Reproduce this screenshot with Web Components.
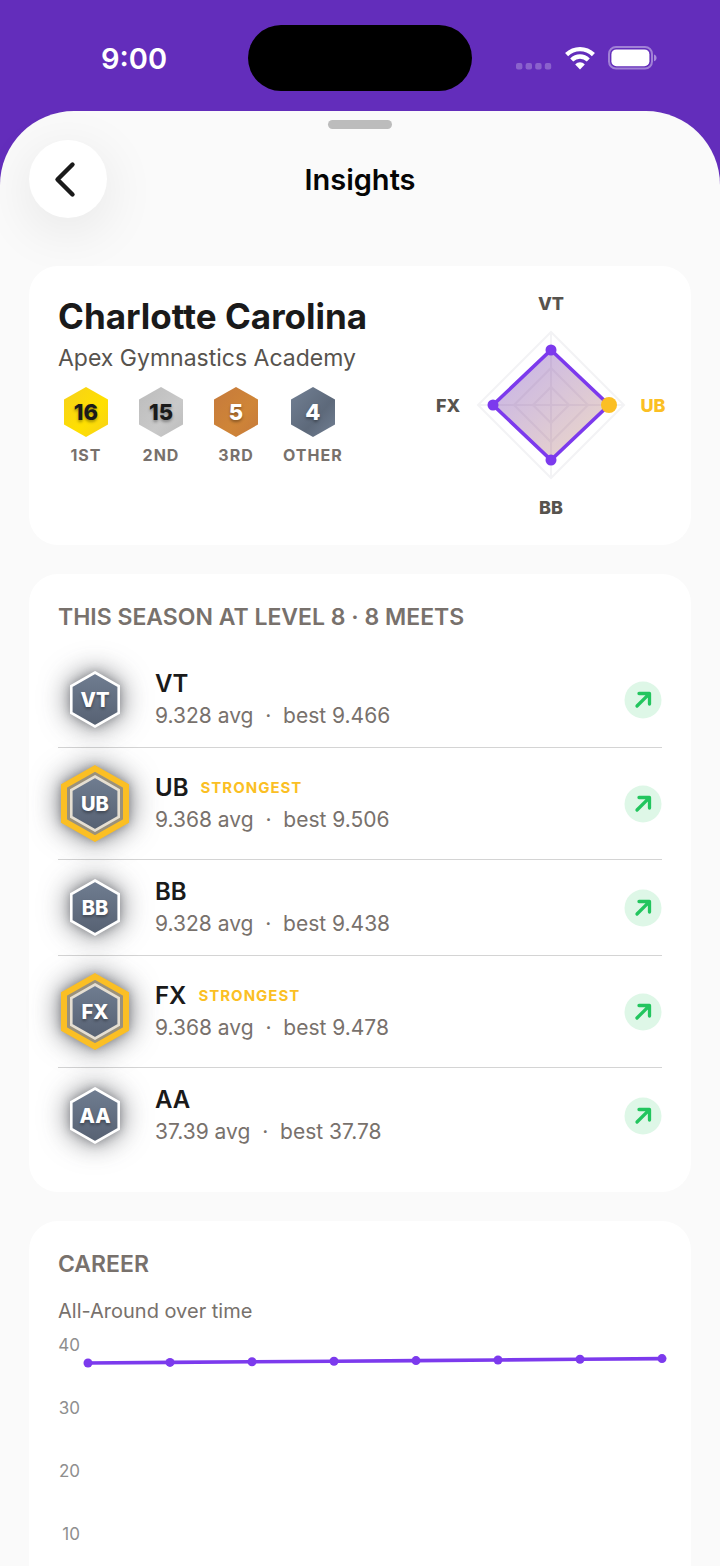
<!DOCTYPE html>
<html lang="en">
<head>
    <meta charset="utf-8">
    <meta name="viewport" content="width=device-width, initial-scale=1">
    <title>Insights</title>
    <style>
        body {
            margin: 0;
            background: #632dbb;
            font-family: Inter, "Liberation Sans", sans-serif;
            color: #1a1a1a;
        }
    </style>
</head>
<body>
<insights-page></insights-page>

<script>
class StatusBar extends HTMLElement {
    constructor() {
        super();
        this.attachShadow({mode: 'open'}).innerHTML = `
            <style>
:host {
    display: grid;
    grid-template-columns: 1fr auto 1fr;
    align-items: center;
    padding: 25px 20px 20px;
    color: #fff;
}

.time {
    justify-self: center;
    font-size: 29px;
    font-weight: 600;
}

.island {
    width: 224px;
    height: 66px;
    border-radius: 33px;
    background: #000;
}

.icons {
    justify-self: center;
    display: flex;
    align-items: center;
    gap: 13px;
}
            </style>
            <span class="time"><slot></slot></span>
            <div class="island"></div>
            <div class="icons">
                <svg width="36" height="24" viewBox="0 0 36 24" fill="#fff" opacity=".25">
                    <rect x="0" y="17" width="6.4" height="6.4" rx="2"/>
                    <rect x="9.6" y="17" width="6.4" height="6.4" rx="2"/>
                    <rect x="19.2" y="17" width="6.4" height="6.4" rx="2"/>
                    <rect x="28.8" y="17" width="6.4" height="6.4" rx="2"/>
                </svg>
                <svg width="30" height="24" viewBox="0 0 30 24" fill="none" stroke="#fff" stroke-width="4.4">
                    <path d="M1.6 8.6C9.2 1.3 20.8 1.3 28.4 8.6"/>
                    <path d="M6.7 14C11.6 9.4 18.4 9.4 23.3 14"/>
                    <path d="M10.2 18.4C13 15.6 17 15.6 19.800 18.4L15 23.400Z" fill="#fff" stroke="none"/>
                </svg>
                <svg width="49" height="24" viewBox="0 0 49 24">
                    <rect x="1" y="1" width="43" height="21.6" rx="7" fill="none" stroke="#fff" stroke-opacity=".4" stroke-width="2"/>
                    <rect x="3.4" y="3.4" width="38" height="16.8" rx="5" fill="#fff"/>
                    <path d="M46 8.6c3.4 1 3.4 5.6 0 6.6z" fill="#fff" fill-opacity=".45"/>
                </svg>
            </div>
        `;
    }
}

class SheetHeader extends HTMLElement {
    constructor() {
        super();
        this.attachShadow({mode: 'open'}).innerHTML = `
            <style>
:host {
    display: block;
    padding: 9px 29px 48px;
}

.grabber {
    width: 64px;
    height: 9px;
    margin: 0 auto 11px;
    border-radius: 5px;
    background: #bcbcbc;
}

.bar {
    display: grid;
    grid-template-columns: 1fr auto 1fr;
    align-items: center;
}

button {
    display: grid;
    place-items: center;
    width: 78px;
    height: 78px;
    padding: 0;
    border: 0;
    border-radius: 50%;
    background: #fff;
    box-shadow: 0 12px 56px rgb(0 0 0 / 9%);
    cursor: pointer;
}

h1 {
    margin: 0;
    font-size: 29px;
    font-weight: 600;
    color: #050505;
}
            </style>
            <div class="grabber"></div>
            <div class="bar">
                <button type="button" aria-label="Back">
                    <svg width="30" height="38" viewBox="0 0 30 38" fill="none" stroke="#1a1a1a" stroke-width="4.4" stroke-linecap="round" stroke-linejoin="round">
                        <path d="M19.500 4.500L4.500 19.500L19.500 34.500"/>
                    </svg>
                </button>
                <h1><slot></slot></h1>
            </div>
        `;
    }
}

class InsightCard extends HTMLElement {
    constructor() {
        super();
        this.attachShadow({mode: 'open'}).innerHTML = `
            <style>
:host {
    display: block;
    box-sizing: border-box;
    padding: 29px;
    border-radius: 29px;
    background: #fff;
}

:host([open-end]) {
    flex: 1;
    padding-bottom: 0;
    border-radius: 29px 29px 0 0;
}

h2 {
    margin: 0 0 21px;
    font-size: 23px;
    font-weight: 600;
    line-height: 28px;
    color: #78716c;
}
            </style>
            ${this.hasAttribute('heading') ? `<h2>${this.getAttribute('heading')}</h2>` : ''}
            <slot></slot>
        `;
    }
}

class MedalCount extends HTMLElement {
    constructor() {
        super();
        const [from, to, ink] = {
            gold: ['#f6d01c', '#ffe000', '#1a1a1a'],
            silver: ['#bcbcbc', '#c9c9c9', '#1a1a1a'],
            bronze: ['#c67a3c', '#cf8537', '#fff'],
            slate: ['#728094', '#5d697a', '#fff']
        }[this.getAttribute('tone')];
        this.attachShadow({mode: 'open'}).innerHTML = `
            <style>
:host {
    display: flex;
    flex-direction: column;
    align-items: center;
    gap: 8px;
    min-width: 56px;
}

.hex {
    display: grid;
    place-items: center;
}

.hex > * {
    grid-area: 1 / 1;
}

b {
    font-size: 22px;
    font-weight: 800;
    color: ${ink};
    text-shadow: 0 2px 3px rgb(0 0 0 / 35%);
}

.label {
    font-size: 16px;
    font-weight: 700;
    line-height: 20px;
    letter-spacing: 1px;
    color: #78716c;
}
            </style>
            <div class="hex">
                <svg width="44" height="50" viewBox="0 0 44 50">
                    <linearGradient id="fill" x1="0" y1="0" x2="1" y2="1">
                        <stop offset="0" stop-color="${from}"/>
                        <stop offset=".6" stop-color="${to}"/>
                        <stop offset="1" stop-color="${from}"/>
                    </linearGradient>
                    <path d="M22 0L44 12.5V37.5L22 50L0 37.5V12.5Z" fill="url(#fill)"/>
                </svg>
                <b>${this.getAttribute('count')}</b>
            </div>
            <span class="label"><slot></slot></span>
        `;
    }
}

class EventRadar extends HTMLElement {
    constructor() {
        super();
        const rings = [18, 37, 55, 73]
            .map(r => `<path d="M109 ${110 - r}L${109 + r} 110L109 ${110 + r}L${109 - r} 110Z"/>`)
            .join('');
        this.attachShadow({mode: 'open'}).innerHTML = `
            <style>
:host {
    display: block;
}

svg {
    display: block;
    overflow: visible;
}

text {
    font-size: 18px;
    font-weight: 800;
    text-anchor: middle;
    fill: #57534e;
}

text.best {
    fill: #fbbf24;
}
            </style>
            <svg width="220" height="221" viewBox="0 0 220 221">
                <linearGradient id="area" x1="0" y1="0" x2="1" y2="1">
                    <stop offset="0" stop-color="#c3b0ea"/>
                    <stop offset="1" stop-color="#efdac6"/>
                </linearGradient>
                <g fill="none" stroke="#f3f3f5" stroke-width="2">
                    ${rings}
                    <path d="M109 37V183M36 110H182"/>
                </g>
                <path d="M109 55L167 110L109 165L51 110Z" fill="url(#area)" stroke="#7c3aed" stroke-width="3.6"/>
                <path d="M109 92L127 110L109 128L91 110ZM109 73L146 110L109 147L72 110ZM109 60V160M56 110H162" fill="none" stroke="#8b6f9c" stroke-opacity=".1" stroke-width="2"/>
                <g fill="#7c3aed">
                    <circle cx="109" cy="55" r="5.5"/>
                    <circle cx="109" cy="165" r="5.5"/>
                    <circle cx="51" cy="110" r="5.5"/>
                </g>
                <circle cx="167" cy="110" r="8" fill="#fbbf24"/>
                <text x="109" y="15">VT</text>
                <text x="211" y="117" class="best">UB</text>
                <text x="109" y="219">BB</text>
                <text x="6" y="117">FX</text>
            </svg>
        `;
    }
}

class AthleteSummary extends HTMLElement {
    constructor() {
        super();
        this.attachShadow({mode: 'open'}).innerHTML = `
            <style>
:host {
    display: flex;
    justify-content: space-between;
}

h2 {
    margin: 0;
    font-size: 35px;
    font-weight: 700;
    line-height: 42px;
}

p {
    margin: 8px 0 16px;
    font-size: 23px;
    line-height: 26px;
    color: #57534e;
}

.medals {
    display: flex;
    gap: 19px;
}
            </style>
            <div>
                <h2>${this.getAttribute('name')}</h2>
                <p>${this.getAttribute('club')}</p>
                <div class="medals"><slot></slot></div>
            </div>
            <event-radar></event-radar>
        `;
    }
}

class EventBadge extends HTMLElement {
    constructor() {
        super();
        const strong = this.hasAttribute('strong');
        const height = strong ? 79 : 59;
        this.attachShadow({mode: 'open'}).innerHTML = `
            <style>
:host {
    display: grid;
    place-items: center;
    width: 74px;
}

:host > * {
    grid-area: 1 / 1;
}

svg {
    overflow: visible;
    filter: drop-shadow(0 0 5px rgb(45 48 56 / 35%)) drop-shadow(0 0 14px rgb(45 48 56 / 65%));
}

b {
    z-index: 1;
    font-size: 20px;
    font-weight: 800;
    color: #fff;
    text-shadow: 0 2px 3px rgb(0 0 0 / 35%);
}
            </style>
            <svg width="74" height="${height}" viewBox="0 0 74 ${height}">
                <linearGradient id="slate" x1="0" y1="0" x2="0" y2="1">
                    <stop offset="0" stop-color="#707d91"/>
                    <stop offset="1" stop-color="#566172"/>
                </linearGradient>
                <g transform="translate(37 ${height / 2})">
                    ${strong ? '<path d="M0 -35L31 -17.5V17.5L0 35L-31 17.5V-17.5Z" fill="#9a917c" stroke="#fbbf24" stroke-width="6"/>' : ''}
                    <path d="M0 -27L23.7 -13.5V13.5L0 27L-23.7 13.5V-13.5Z" fill="url(#slate)" stroke="${strong ? '#e6dfd2' : '#fff'}" stroke-width="2.6"/>
                </g>
            </svg>
            <b><slot></slot></b>
        `;
    }
}

class EventRow extends HTMLElement {
    constructor() {
        super();
        const event = this.getAttribute('event');
        const strong = this.hasAttribute('strong');
        this.attachShadow({mode: 'open'}).innerHTML = `
            <style>
:host {
    display: flex;
    align-items: center;
    gap: 23px;
    padding: 16px 0;
    border-bottom: 1px solid #d4d4d4;
}

:host(:last-of-type) {
    border-bottom: 0;
}

.text {
    flex: 1;
}

.name {
    display: flex;
    align-items: center;
    gap: 12px;
    font-size: 24px;
    font-weight: 600;
    line-height: 32px;
}

h3 {
    margin: 0;
    font: inherit;
}

.tag {
    font-size: 15px;
    font-weight: 700;
    letter-spacing: 1px;
    color: #fbbf24;
}

p {
    margin: 0;
    font-size: 21px;
    line-height: 31px;
    white-space: pre;
    color: #78716c;
}
            </style>
            <event-badge ${strong ? 'strong' : ''}>${event}</event-badge>
            <div class="text">
                <div class="name">
                    <h3>${event}</h3>
                    ${strong ? '<span class="tag">STRONGEST</span>' : ''}
                </div>
                <p>${this.getAttribute('avg')} avg  ·  best ${this.getAttribute('best')}</p>
            </div>
            <svg width="38" height="38" viewBox="0 0 38 38" role="img" aria-label="Improving">
                <circle cx="19" cy="19" r="18.5" fill="#def7e7"/>
                <path d="M13 25L25.200 12.800M15 12.500H25.500V23" fill="none" stroke="#22c55e" stroke-width="3.300" stroke-linecap="round" stroke-linejoin="round"/>
            </svg>
        `;
    }
}

class CareerChart extends HTMLElement {
    constructor() {
        super();
        // one y per meet, in pixels below the top of the axis
        const points = [30, 29.4, 28.8, 28.2, 27.6, 27, 26.2, 25.6];
        const x = i => `${(i * 100 / (points.length - 1)).toFixed(3)}%`;
        const lines = points.slice(1)
            .map((y, i) => `<line x1="${x(i)}" y1="${points[i]}" x2="${x(i + 1)}" y2="${y}"/>`)
            .join('');
        const dots = points.map((y, i) => `<circle cx="${x(i)}" cy="${y}" r="4.5"/>`).join('');
        this.attachShadow({mode: 'open'}).innerHTML = `
            <style>
:host {
    display: block;
}

h3 {
    margin: 0 0 10px;
    font-size: 20px;
    font-weight: 400;
    line-height: 24px;
    color: #78716c;
}

.plot {
    display: flex;
    gap: 8px;
}

.axis {
    display: flex;
    flex-direction: column;
    align-items: flex-end;
    gap: 39px;
    width: 22px;
    font-size: 17px;
    line-height: 24px;
    color: #8e8e8e;
}

svg {
    flex: 1;
    min-width: 0;
    height: 213px;
    overflow: visible;
    stroke: #7c3aed;
    stroke-width: 3.6;
}

circle {
    fill: #7c3aed;
    stroke: none;
}
            </style>
            <h3><slot></slot></h3>
            <div class="plot">
                <div class="axis">
                    <span>40</span>
                    <span>30</span>
                    <span>20</span>
                    <span>10</span>
                </div>
                <svg>${lines}${dots}</svg>
            </div>
        `;
    }
}

class InsightsPage extends HTMLElement {
    constructor() {
        super();
        this.attachShadow({mode: 'open'}).innerHTML = `
            <style>
:host {
    display: flex;
    flex-direction: column;
    min-height: 100vh;
}

.sheet {
    flex: 1;
    display: flex;
    flex-direction: column;
    border-radius: 74px 74px 0 0;
    background: #fafafa;
}

main {
    flex: 1;
    display: flex;
    flex-direction: column;
    gap: 29px;
    padding: 0 29px;
}
            </style>
            <status-bar>9:00</status-bar>
            <div class="sheet">
                <sheet-header>Insights</sheet-header>
                <main>
                    <insight-card>
                        <athlete-summary name="Charlotte Carolina" club="Apex Gymnastics Academy">
                            <medal-count tone="gold" count="16">1ST</medal-count>
                            <medal-count tone="silver" count="15">2ND</medal-count>
                            <medal-count tone="bronze" count="5">3RD</medal-count>
                            <medal-count tone="slate" count="4">OTHER</medal-count>
                        </athlete-summary>
                    </insight-card>
                    <insight-card heading="THIS SEASON AT LEVEL 8 · 8 MEETS">
                        <event-row event="VT" avg="9.328" best="9.466"></event-row>
                        <event-row event="UB" avg="9.368" best="9.506" strong></event-row>
                        <event-row event="BB" avg="9.328" best="9.438"></event-row>
                        <event-row event="FX" avg="9.368" best="9.478" strong></event-row>
                        <event-row event="AA" avg="37.39" best="37.78"></event-row>
                    </insight-card>
                    <insight-card heading="CAREER" open-end>
                        <career-chart>All-Around over time</career-chart>
                    </insight-card>
                </main>
            </div>
        `;
    }
}

window.customElements.define('status-bar', StatusBar)
window.customElements.define('sheet-header', SheetHeader)
window.customElements.define('insight-card', InsightCard)
window.customElements.define('medal-count', MedalCount)
window.customElements.define('event-radar', EventRadar)
window.customElements.define('athlete-summary', AthleteSummary)
window.customElements.define('event-badge', EventBadge)
window.customElements.define('event-row', EventRow)
window.customElements.define('career-chart', CareerChart)
window.customElements.define('insights-page', InsightsPage)
</script>
</body>
</html>
